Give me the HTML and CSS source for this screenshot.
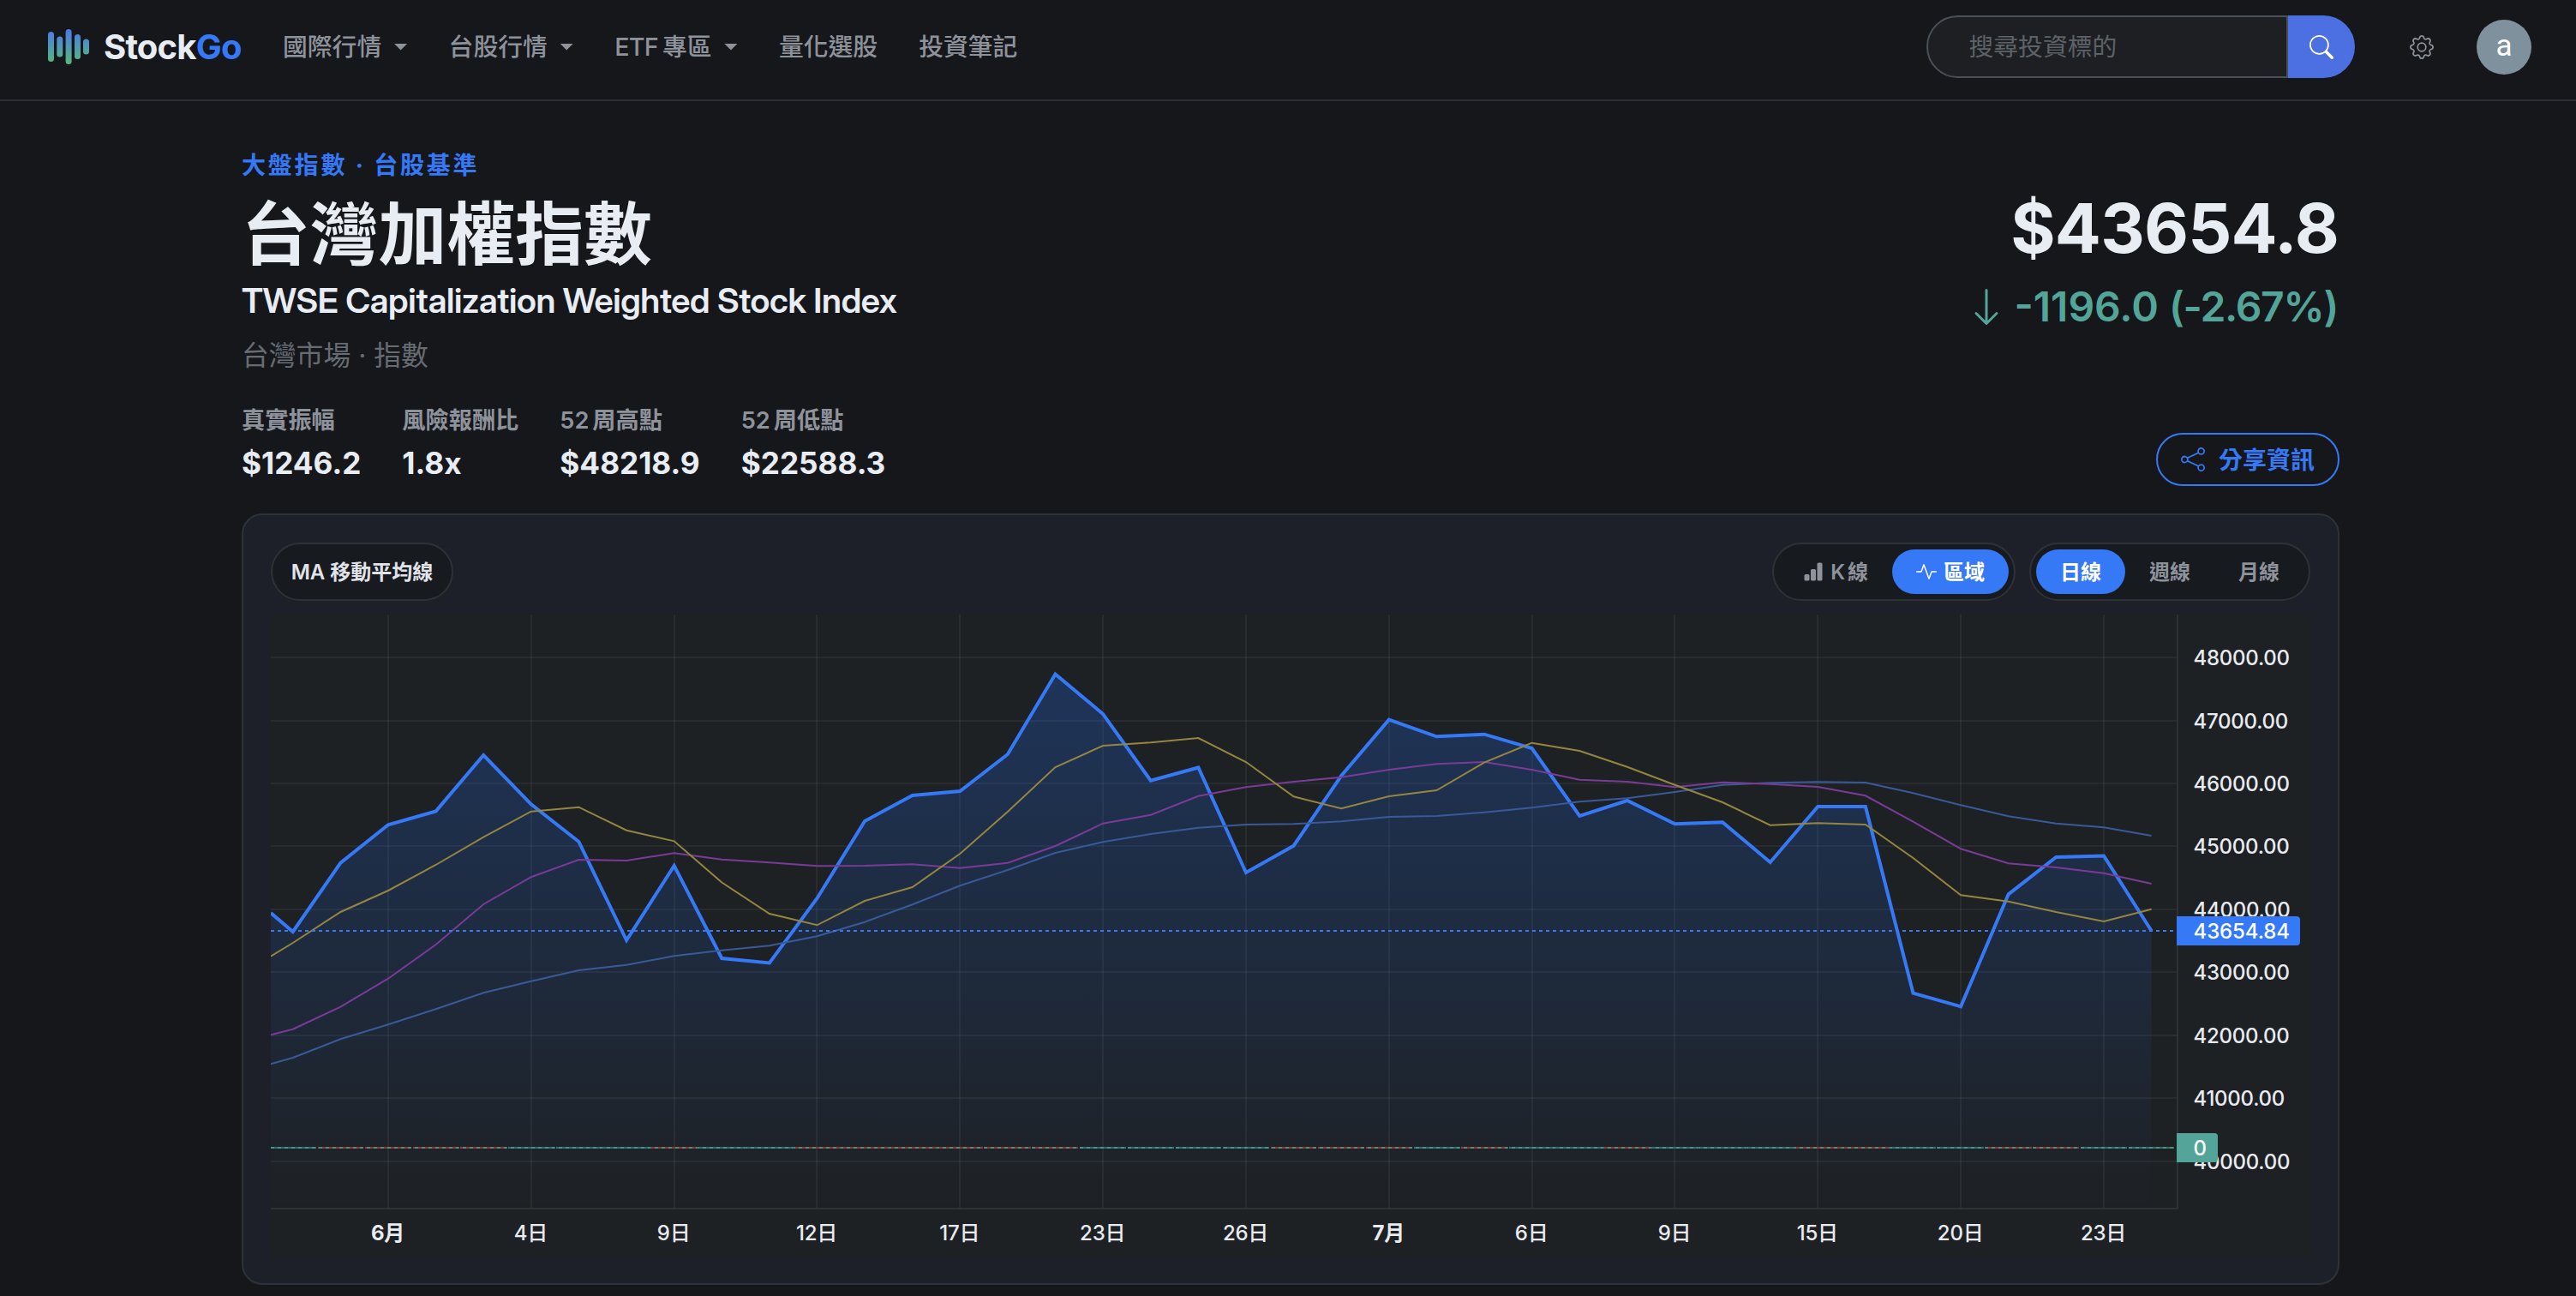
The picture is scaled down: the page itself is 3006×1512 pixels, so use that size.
FILE: index.html
```html
<!DOCTYPE html>
<html lang="zh-Hant">
<head>
<meta charset="utf-8">
<title>台灣加權指數 - StockGo</title>
<link rel="stylesheet" href="styles.css">
</head>
<body>
<header class="topbar">
  <a class="brand">
    <svg class="brand-mark" viewBox="0 0 48 41" width="48" height="41">
      <defs>
        <linearGradient id="brandGradient" x1="0" y1="0" x2="0" y2="41" gradientUnits="userSpaceOnUse">
          <stop offset="0" stop-color="#4a78ec"/>
          <stop offset="1" stop-color="#57b978"/>
        </linearGradient>
      </defs>
      <g fill="url(#brandGradient)">
        <rect x="0" y="3" width="7" height="35" rx="3.5"/>
        <rect x="10.3" y="8.5" width="7" height="24" rx="3.5"/>
        <rect x="20.6" y="0" width="7" height="41" rx="3.5"/>
        <rect x="31" y="6" width="7" height="29" rx="3.5"/>
        <rect x="41" y="11.5" width="7" height="18" rx="3.5"/>
      </g>
    </svg>
    <span class="brand-name">Stock<span class="brand-accent">Go</span></span>
  </a>
  <nav class="nav">
    <a class="nav-item">國際行情<i class="caret"></i></a>
    <a class="nav-item">台股行情<i class="caret"></i></a>
    <a class="nav-item nav-etf"><span class="latin">ETF</span>專區<i class="caret"></i></a>
    <a class="nav-item">量化選股</a>
    <a class="nav-item">投資筆記</a>
  </nav>
  <div class="tools">
    <div class="search">
      <div class="search-field">搜尋投資標的</div>
      <button class="search-btn" aria-label="搜尋">
        <svg viewBox="0 0 16 16" width="28" height="28" fill="currentColor"><path d="M11.742 10.344a6.5 6.5 0 1 0-1.397 1.398h-.001q.044.06.098.115l3.85 3.85a1 1 0 0 0 1.415-1.414l-3.85-3.85a1 1 0 0 0-.115-.1zM12 6.5a5.5 5.5 0 1 1-11 0 5.5 5.5 0 0 1 11 0"/></svg>
      </button>
    </div>
    <svg class="gear" viewBox="0 0 16 16" width="28" height="28" fill="currentColor"><path d="M8 4.754a3.246 3.246 0 1 0 0 6.492 3.246 3.246 0 0 0 0-6.492M5.754 8a2.246 2.246 0 1 1 4.492 0 2.246 2.246 0 0 1-4.492 0"/><path d="M9.796 1.343c-.527-1.79-3.065-1.79-3.592 0l-.094.319a.873.873 0 0 1-1.255.52l-.292-.16c-1.64-.892-3.433.902-2.54 2.541l.159.292a.873.873 0 0 1-.52 1.255l-.319.094c-1.79.527-1.79 3.065 0 3.592l.319.094a.873.873 0 0 1 .52 1.255l-.16.292c-.892 1.64.901 3.434 2.541 2.54l.292-.159a.873.873 0 0 1 1.255.52l.094.319c.527 1.79 3.065 1.79 3.592 0l.094-.319a.873.873 0 0 1 1.255-.52l.292.16c1.64.893 3.434-.902 2.54-2.541l-.159-.292a.873.873 0 0 1 .52-1.255l.319-.094c1.79-.527 1.79-3.065 0-3.592l-.319-.094a.873.873 0 0 1-.52-1.255l.16-.292c.893-1.64-.902-3.433-2.541-2.54l-.292.159a.873.873 0 0 1-1.255-.52zm-2.633.283c.246-.835 1.428-.835 1.674 0l.094.319a1.873 1.873 0 0 0 2.693 1.115l.291-.16c.764-.415 1.6.42 1.184 1.185l-.159.292a1.873 1.873 0 0 0 1.116 2.692l.318.094c.835.246.835 1.428 0 1.674l-.319.094a1.873 1.873 0 0 0-1.115 2.693l.16.291c.415.764-.42 1.6-1.185 1.184l-.291-.159a1.873 1.873 0 0 0-2.693 1.116l-.094.318c-.246.835-1.428.835-1.674 0l-.094-.319a1.873 1.873 0 0 0-2.692-1.115l-.292.16c-.764.415-1.6-.42-1.184-1.185l.159-.291A1.873 1.873 0 0 0 1.945 8.93l-.319-.094c-.835-.246-.835-1.428 0-1.674l.319-.094A1.873 1.873 0 0 0 3.06 4.377l-.16-.292c-.415-.764.42-1.6 1.185-1.184l.292.159a1.873 1.873 0 0 0 2.692-1.115z"/></svg>
    <div class="avatar">a</div>
  </div>
</header>

<main class="page">
  <section class="hero">
    <div class="hero-left">
      <div class="eyebrow">大盤指數 · 台股基準</div>
      <h1 class="title">台灣加權指數</h1>
      <div class="subtitle">TWSE Capitalization Weighted Stock Index</div>
      <div class="market">台灣市場 · 指數</div>
      <dl class="stats">
        <div class="stat"><dt>真實振幅</dt><dd>$1246.2</dd></div>
        <div class="stat"><dt>風險報酬比</dt><dd>1.8x</dd></div>
        <div class="stat"><dt><span class="latin">52</span>周高點</dt><dd>$48218.9</dd></div>
        <div class="stat"><dt><span class="latin">52</span>周低點</dt><dd>$22588.3</dd></div>
      </dl>
    </div>
    <div class="hero-right">
      <div class="price">$43654.8</div>
      <div class="change">
        <svg viewBox="0 0 16 16" width="48" height="48" fill="currentColor"><path fill-rule="evenodd" d="M8 1a.5.5 0 0 1 .5.5v11.793l3.146-3.147a.5.5 0 0 1 .708.708l-4 4a.5.5 0 0 1-.708 0l-4-4a.5.5 0 0 1 .708-.708L7.5 13.293V1.5A.5.5 0 0 1 8 1"/></svg>
        <span>-1196.0 <span class="percent">(-2.67%)</span></span>
      </div>
      <button class="share">
        <svg viewBox="0 0 16 16" width="28" height="28" fill="currentColor"><path d="M13.5 1a1.5 1.5 0 1 0 0 3 1.5 1.5 0 0 0 0-3M11 2.5a2.5 2.5 0 1 1 .603 1.628l-6.718 3.12a2.5 2.5 0 0 1 0 1.504l6.718 3.12a2.5 2.5 0 1 1-.488.876l-6.718-3.12a2.5 2.5 0 1 1 0-3.256l6.718-3.12A2.5 2.5 0 0 1 11 2.5m-8.5 4a1.5 1.5 0 1 0 0 3 1.5 1.5 0 0 0 0-3m11 5.5a1.5 1.5 0 1 0 0 3 1.5 1.5 0 0 0 0-3"/></svg>
        <span class="share-text">分享資訊</span>
      </button>
    </div>
  </section>

  <section class="card">
    <div class="toolbar">
      <button class="ma-btn">MA 移動平均線</button>
      <div class="toggles">
        <div class="segmented">
          <button class="seg">
            <svg viewBox="0 0 16 16" width="24" height="24" fill="currentColor"><path d="M1 11a1 1 0 0 1 1-1h2a1 1 0 0 1 1 1v3a1 1 0 0 1-1 1H2a1 1 0 0 1-1-1zm5-4a1 1 0 0 1 1-1h2a1 1 0 0 1 1 1v7a1 1 0 0 1-1 1H7a1 1 0 0 1-1-1zm5-5a1 1 0 0 1 1-1h2a1 1 0 0 1 1 1v12a1 1 0 0 1-1 1h-2a1 1 0 0 1-1-1z"/></svg>
            <span class="seg-text"><span class="latin-k">K</span>線</span>
          </button>
          <button class="seg active">
            <svg viewBox="0 0 16 16" width="24" height="24" fill="currentColor"><path fill-rule="evenodd" d="M6 2a.5.5 0 0 1 .47.33L10 12.036l1.53-4.208A.5.5 0 0 1 12 7.5h3.5a.5.5 0 0 1 0 1h-3.15l-1.88 5.17a.5.5 0 0 1-.94 0L6 3.964 4.47 8.171A.5.5 0 0 1 4 8.5H.5a.5.5 0 0 1 0-1h3.15l1.88-5.17A.5.5 0 0 1 6 2"/></svg>
            <span class="seg-text">區域</span>
          </button>
        </div>
        <div class="segmented">
          <button class="seg active"><span class="seg-text">日線</span></button>
          <button class="seg"><span class="seg-text">週線</span></button>
          <button class="seg"><span class="seg-text">月線</span></button>
        </div>
      </div>
    </div>
    <svg class="chart" id="chart" viewBox="0 0 2380 750" width="2380" height="750"></svg>
  </section>
</main>
<script src="chart.js"></script>
</body>
</html>
```
FILE: styles.css
```css
* { box-sizing: border-box; }

body {
  margin: 0;
  height: 1512px;
  overflow: hidden;
  background: #16171b;
  color: #e8ecf3;
  font-family: Inter, "Noto Sans CJK TC", sans-serif;
}

button {
  font: inherit;
  color: inherit;
  background: none;
  border: 0;
  padding: 0;
}

svg { display: block; flex: none; }

/* top bar */
.topbar {
  display: flex;
  align-items: center;
  height: 118px;
  padding: 0 52px 7px 56px;
  border-bottom: 2px solid #2b2f35;
}

.brand { display: flex; align-items: center; gap: 17px; width: 274px; }
.brand-name { font-size: 40px; font-weight: 700; line-height: 48px; letter-spacing: -0.8px; white-space: nowrap; }
.brand-accent { color: #3579f7; }

.nav { display: flex; gap: 48px; }
.nav-item {
  display: flex;
  align-items: center;
  font-size: 28.8px;
  font-weight: 500;
  line-height: 40px;
  color: #8d929b;
  white-space: nowrap;
}
.caret {
  width: 16px;
  height: 8px;
  margin-left: 14.4px;
  background: #8d929b;
  clip-path: polygon(0 0, 100% 0, 50% 100%);
}
.nav .latin { margin-right: 5px; letter-spacing: -0.8px; }

.tools { display: flex; align-items: center; margin-left: auto; }
.search { display: flex; width: 500px; height: 73px; }
.search-field {
  flex: 1;
  padding-left: 47.5px;
  line-height: 69px;
  font-size: 28.8px;
  color: #5d6268;
  background: #1e1f22;
  border: 2px solid #495057;
  border-radius: 37px 0 0 37px;
}
.search-btn {
  display: flex;
  align-items: center;
  justify-content: center;
  width: 78px;
  color: #fff;
  background: #4c70e2;
  border-radius: 0 37px 37px 0;
}
.gear { margin-left: 64px; color: #8d929b; }
.avatar {
  width: 64px;
  height: 64px;
  margin-left: 50px;
  border-radius: 50%;
  background: #7e919c;
  color: #fff;
  font: 400 35px/61px Roboto, sans-serif;
  text-align: center;
}

/* headline */
.page { width: 2448px; margin-left: 282px; padding-top: 59px; }
.hero { display: flex; justify-content: space-between; height: 390px; }

.eyebrow { font-size: 28px; font-weight: 700; line-height: 32px; letter-spacing: 2.8px; color: #3579f7; }
.title { margin: 20px 0 0; font-size: 79.8px; font-weight: 700; line-height: 88px; }
.subtitle {
  margin-top: 10px;
  font-family: "Inter Display", Inter, sans-serif;
  font-size: 40px;
  font-weight: 600;
  line-height: 48px;
  letter-spacing: -0.32px;
}
.market { margin-top: 20px; font-size: 31.8px; line-height: 40px; color: #676c73; }

.stats { display: flex; gap: 48px; margin: 38px 0 0; }
.stat dt { font-size: 27.2px; font-weight: 700; line-height: 36px; color: #8d929b; }
.stat dt .latin { margin-right: 4px; font-weight: 600; }
.stat dd { margin: 11px 0 0; font-size: 35.2px; font-weight: 700; line-height: 40px; }

.hero-right { display: flex; flex-direction: column; align-items: flex-end; padding-top: 45px; }
.price { padding-right: 1px; font-size: 80px; font-weight: 700; line-height: 88px; letter-spacing: -0.8px; }
.change {
  display: flex;
  align-items: center;
  gap: 8px;
  margin-top: 20px;
  padding-right: 2px;
  font-size: 48px;
  font-weight: 600;
  line-height: 56px;
  color: #53a59a;
}
.percent { letter-spacing: -1.3px; }
.share {
  display: flex;
  align-items: center;
  gap: 16px;
  width: 214px;
  height: 62px;
  margin-top: 119px;
  padding-left: 27px;
  border: 2px solid #3579f7;
  border-radius: 31px;
  font-size: 28px;
  font-weight: 700;
  color: #3579f7;
}
.share-text { padding-bottom: 3px; }

/* chart card */
.card {
  height: 900px;
  margin-top: 32px;
  padding: 32px;
  border: 2px solid #2e3238;
  border-radius: 24px;
  background: #1d2029;
}
.toolbar { display: flex; justify-content: space-between; height: 68px; }
.ma-btn {
  width: 213px;
  padding-bottom: 3px;
  border: 2px solid #2e3236;
  border-radius: 34px;
  background: #171a1e;
  font-size: 24px;
  font-weight: 600;
  color: #e0e3e8;
  white-space: nowrap;
}
.toggles { display: flex; gap: 16px; }
.segmented {
  display: flex;
  padding: 6px;
  border: 2px solid #2e3236;
  border-radius: 34px;
  background: #171a1e;
}
.seg {
  display: flex;
  align-items: center;
  gap: 8px;
  padding: 0 28px;
  border-radius: 26px;
  font-size: 24px;
  font-weight: 700;
  color: #8d929b;
}
.seg-text { padding-bottom: 3px; }
.seg.active { background: #3579f7; color: #fff; }
.latin-k { margin-right: 3px; font-weight: 600; }

.chart { margin-top: 16px; background: #1e2124; }
.chart .grid { fill: #ffffff; fill-opacity: 0.05; }
.chart .axis { fill: #2e3237; }
.chart .line { fill: none; stroke-width: 2; }
.chart .price-line { stroke: #3579f7; stroke-width: 4; }
.chart .ma5 { stroke: #94853f; }
.chart .ma10 { stroke: #7a3b98; }
.chart .ma20 { stroke: #385a98; }
.chart .area { fill: url(#areaFill); }
.chart .label { fill: #e8ebf0; font-size: 24px; font-weight: 500; letter-spacing: -0.25px; }
.chart .label.major { font-weight: 700; }
.chart .time { text-anchor: middle; }
.chart .tag-text { fill: #fff; font-size: 24px; font-weight: 500; letter-spacing: -0.1px; }
.chart .vol-up { fill: #8a3b3b; }
.chart .vol-down { fill: #35706a; }
```
FILE: chart.js
```js
// Plot geometry, in chart pixels.
const PLOT_W = 2224, PLOT_H = 692, ZERO_X = 137, STEP = 55.61, FIRST = -2, TOP = 717;
const xs = i => ZERO_X + STEP * (i + FIRST);

// First value of each series is where it enters at the left edge.
const close = [1065, 1087, 1006.7, 962.3, 946.5, 881, 938.3, 982, 1097, 1010, 1118, 1123.5, 1048, 958, 928, 923, 880, 786.5, 833, 910.7, 895.5, 1018, 986.7, 905, 839.7, 859.3, 856.7, 873, 952, 934, 961.3, 959.3, 1006, 941, 941, 1158.7, 1174.3, 1043.3, 1000, 998.5, 1086];
const ma5 = [1115.7, 1100, 1064, 1039, 1009, 976.7, 946.7, 941.7, 968.7, 981.3, 1029.5, 1066, 1079.3, 1051, 1035, 996, 947, 895, 870, 866.3, 861, 889, 929.3, 943.3, 929, 922, 889.7, 866.7, 876, 894.7, 915.7, 936, 962.7, 960.3, 962, 1001, 1044.3, 1051.7, 1064, 1075, 1060.7];
const ma10 = [1207.3, 1200.7, 1174.7, 1141.7, 1102, 1055, 1023.2, 1003, 1004, 995.3, 1002.7, 1006.3, 1010.3, 1010, 1008.3, 1012.7, 1006.7, 987, 960.7, 950.7, 928.7, 918.3, 912, 906.7, 898, 891.3, 889, 898, 909.7, 912, 918.3, 912.7, 914.7, 918, 928.3, 958.7, 990.3, 1007.3, 1012, 1018.7, 1031];
const ma20 = [1241.3, 1234, 1212.3, 1195.3, 1177.3, 1158.3, 1144.7, 1132, 1125.7, 1115.3, 1108.7, 1103.3, 1092.3, 1075.7, 1055.3, 1033.3, 1015, 995, 982.3, 973, 965.7, 962, 961.3, 958.3, 953, 952, 947.7, 942.3, 935.3, 931.3, 924, 915.7, 913.3, 912.3, 913, 925.3, 939.3, 952.3, 960.7, 965.3, 975];
// u: close above open, d: below
const sessions = 'd uuuu ddd u dd uuuuuu dddd uuu d u dd u ddd uu dd uu dd'.replace(/ /g, '');

const points = s => s.map((y, i) => `${(i === 0 ? 0 : xs(i - 1)).toFixed(1)},${(y - TOP).toFixed(1)}`).join(' ');
const priceY = [50, 124, 197, 270, 344, 417, 491, 564, 638];
const times = ['6月', '4日', '9日', '12日', '17日', '23日', '26日', '7月', '6日', '9日', '15日', '20日', '23日'];

let out = `<defs><linearGradient id="areaFill" gradientUnits="userSpaceOnUse" x1="0" y1="70" x2="0" y2="${PLOT_H}">
<stop offset="0" stop-color="#1e6ef8" stop-opacity="0.25"/><stop offset="1" stop-color="#1e6ef8" stop-opacity="0"/></linearGradient></defs>`;

priceY.forEach(y => { out += `<rect class="grid" x="0" y="${y - 1}" width="${PLOT_W}" height="2"/>`; });
times.forEach((t, i) => { out += `<rect class="grid" x="${Math.round(ZERO_X + i * STEP * 3) - 1}" y="0" width="2" height="${PLOT_H}"/>`; });

// volume strip, one flat bar per session
[...sessions].forEach((s, i) => {
  const left = Math.max(0, Math.round(xs(i) - STEP / 2) + 1);
  const right = Math.min(PLOT_W, Math.round(xs(i) + STEP / 2) - 1);
  out += `<rect class="${s === 'u' ? 'vol-up' : 'vol-down'}" x="${left}" y="621" width="${right - left}" height="2"/>`;
});
out += `<path d="M0 622H2220" stroke="#53a59a" stroke-opacity="0.7" stroke-width="2" stroke-dasharray="4 4"/>`;

out += `<polygon class="area" points="${points(close)} ${xs(close.length - 2)},${PLOT_H} 0,${PLOT_H}"/>`;
out += `<polyline class="line price-line" points="${points(close)}"/>`;
out += `<polyline class="line ma20" points="${points(ma20)}"/>`;
out += `<polyline class="line ma10" points="${points(ma10)}"/>`;
out += `<polyline class="line ma5" points="${points(ma5)}"/>`;
out += `<path d="M0 369H2220" stroke="#3579f7" stroke-width="2" stroke-dasharray="4 4"/>`;

out += `<rect class="axis" x="0" y="${PLOT_H}" width="2226" height="2"/><rect class="axis" x="${PLOT_W}" y="0" width="2" height="${PLOT_H}"/>`;
priceY.forEach((y, i) => { out += `<text class="label" x="2243.5" y="${y + 9}">${48 - i}000.00</text>`; });
times.forEach((t, i) => {
  out += `<text class="label time${t.includes('月') ? ' major' : ''}" x="${ZERO_X + i * STEP * 3 - 0.5}" y="730">${t}</text>`;
});
out += `<path fill="#3579f7" d="M2224 352h140a4 4 0 0 1 4 4v26a4 4 0 0 1-4 4h-140z"/><text class="tag-text" x="2243.5" y="377.5">43654.84</text>`;
out += `<path fill="#53a59a" d="M2224 605h44a4 4 0 0 1 4 4v26a4 4 0 0 1-4 4h-44z"/><text class="tag-text" x="2243.5" y="630.5">0</text>`;

document.getElementById('chart').innerHTML = out;
```
